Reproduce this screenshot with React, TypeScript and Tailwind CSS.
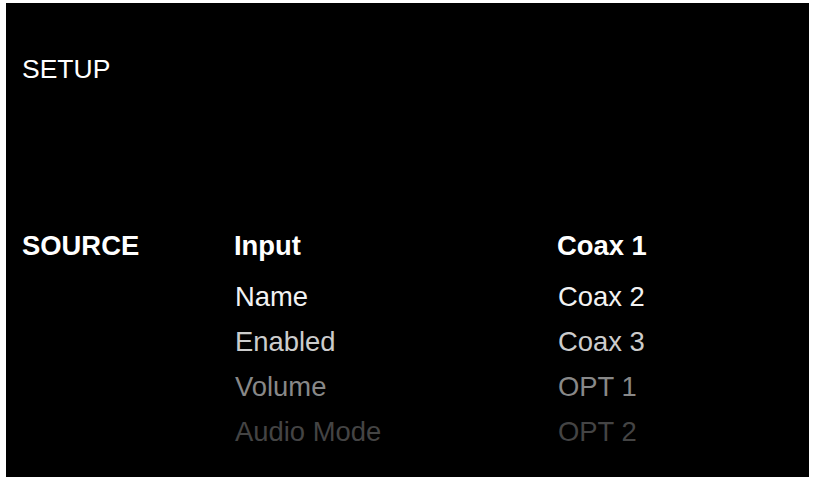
import React from 'react';

type Row = { label: string; value: string; tone: string };

const rows: Row[] = [
  { label: 'Input', value: 'Coax 1', tone: 'text-white font-bold' },
  { label: 'Name', value: 'Coax 2', tone: 'text-[#f2f2f2]' },
  { label: 'Enabled', value: 'Coax 3', tone: 'text-[#cccccc]' },
  { label: 'Volume', value: 'OPT 1', tone: 'text-[#888888]' },
  { label: 'Audio Mode', value: 'OPT 2', tone: 'text-[#444444]' },
];

const App: React.FC = () => {
  return (
    <div className="w-[817px] h-[481px] bg-white pt-[3px] pl-[6px] font-[family-name:'Liberation_Sans',Arial,sans-serif]">
      <div className="w-[803px] h-[474px] bg-black flex flex-col pt-[44px] pl-[16px] select-none">
        {/* Title */}
        <div className="h-[45px] leading-[45px] text-[26.5px] text-white">SETUP</div>

        {/* Menu */}
        <div className="mt-[131px] flex text-[27.4px] leading-[45px]">
          <div className="w-[212px] font-bold text-white">SOURCE</div>

          <div className="w-[323px] flex flex-col">
            {rows.map((r, i) => (
              <div key={r.label} className={`${r.tone} ${i === 0 ? 'mb-[6px]' : 'pl-px'}`}>
                {r.label}
              </div>
            ))}
          </div>

          <div className="flex flex-col">
            {rows.map((r, i) => (
              <div key={r.value} className={`${r.tone} ${i === 0 ? 'mb-[6px]' : 'pl-px'}`}>
                {r.value}
              </div>
            ))}
          </div>
        </div>
      </div>
    </div>
  );
};

export default App;
